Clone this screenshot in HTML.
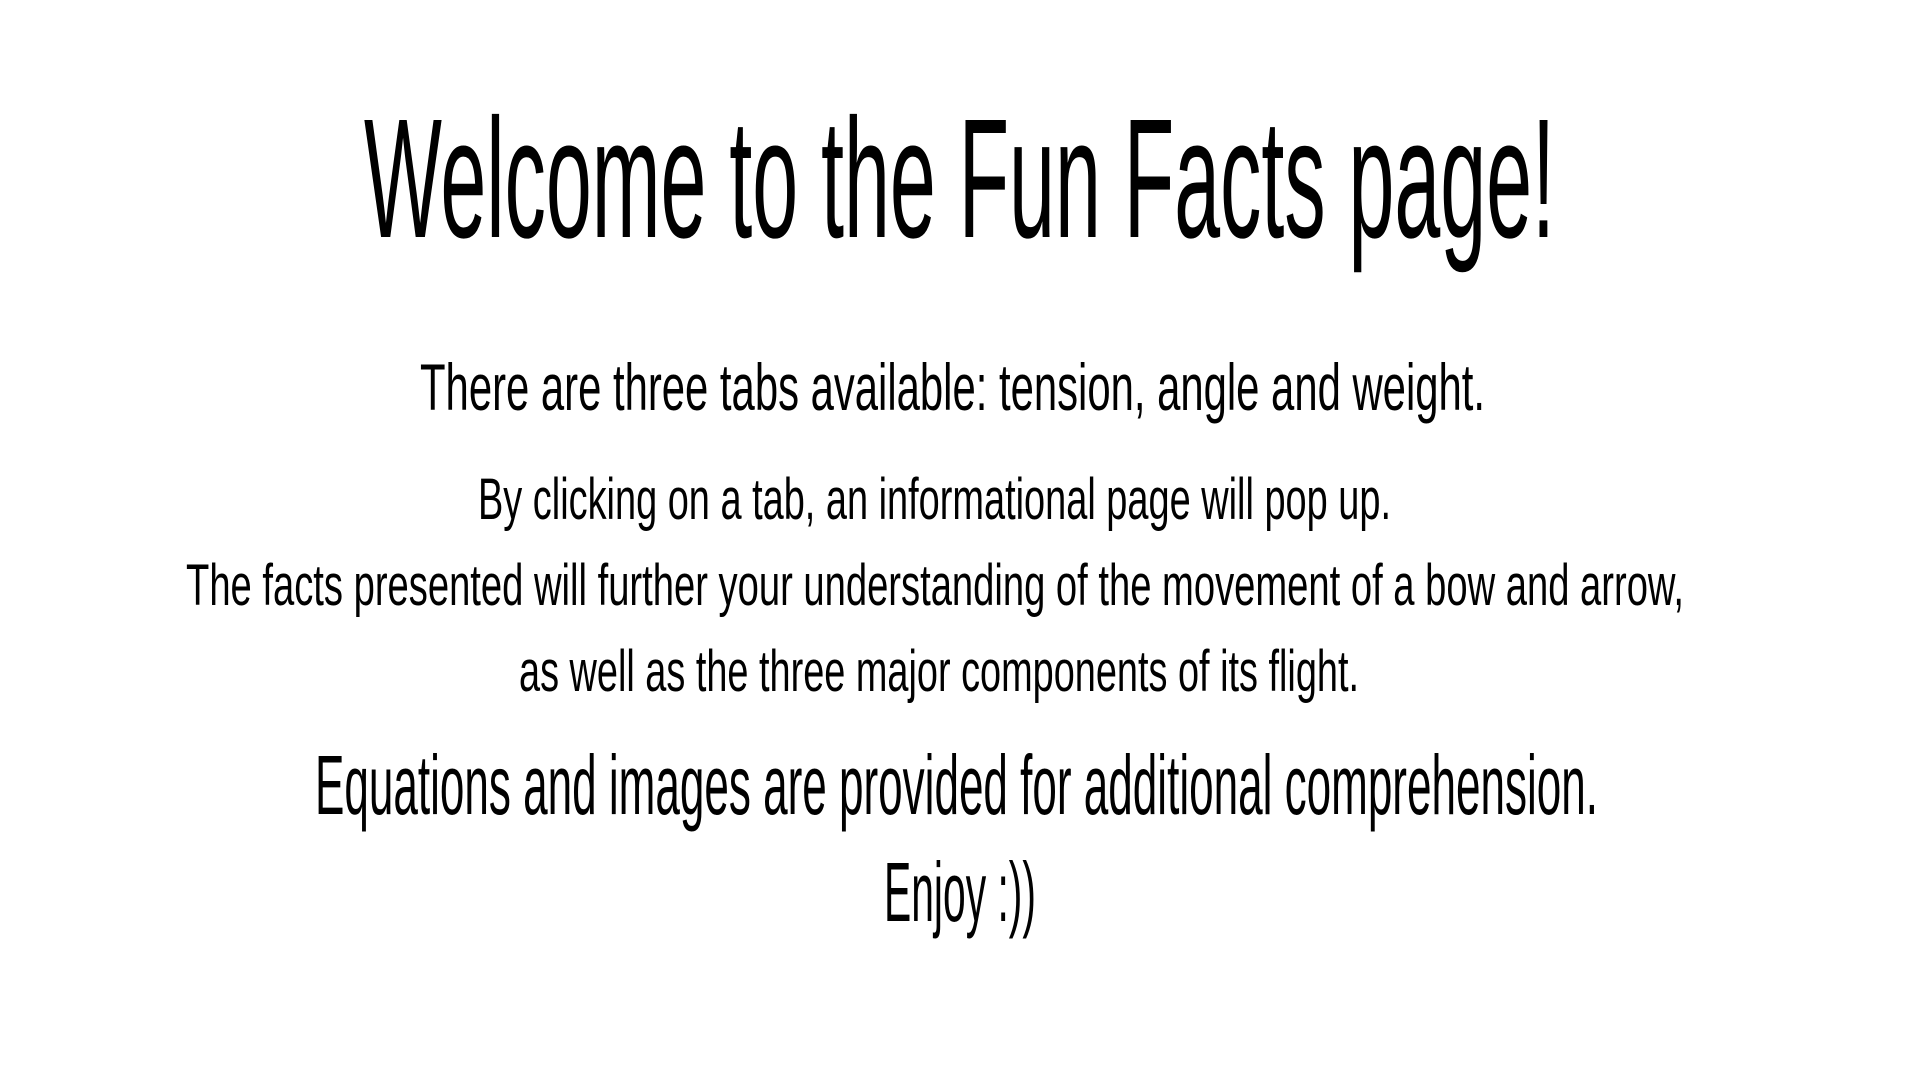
<!DOCTYPE html>
<html><head><meta charset="utf-8"><style>
html,body{margin:0;padding:0;background:#fff;width:1920px;height:1080px;overflow:hidden}
.l{position:absolute;white-space:nowrap;font-family:"Liberation Sans Narrow","Liberation Sans",sans-serif;color:#000;line-height:1;transform-origin:0 0}
</style></head><body>
<div class="l" id="a">Welcome to the Fun Facts page!</div>
<div class="l" id="b">There are three tabs available: tension, angle and weight.</div>
<div class="l" id="c">By clicking on a tab, an informational page will pop up.</div>
<div class="l" id="d">The facts presented will further your understanding of the movement of a bow and arrow,</div>
<div class="l" id="e">as well as the three major components of its flight.</div>
<div class="l" id="f">Equations and images are provided for additional comprehension.</div>
<div class="l" id="g">Enjoy :))</div>
<script>
var L=[["a",364,1555,238,170],["b",420,1485,410,66],["c",478,1391,520,58],["d",186,1684,606,58],["e",519,1359,692,58],["f",315,1598,814,84],["g",884,1036,921,84]];
L.forEach(function(r){var el=document.getElementById(r[0]);el.style.fontSize=r[4]+"px";el.style.left=r[1]+"px";el.style.top=(r[3]-0.8465*r[4])+"px";var w=el.getBoundingClientRect().width;el.style.transform="scaleX("+((r[2]-r[1])/w)+")";});
</script>
</body></html>
